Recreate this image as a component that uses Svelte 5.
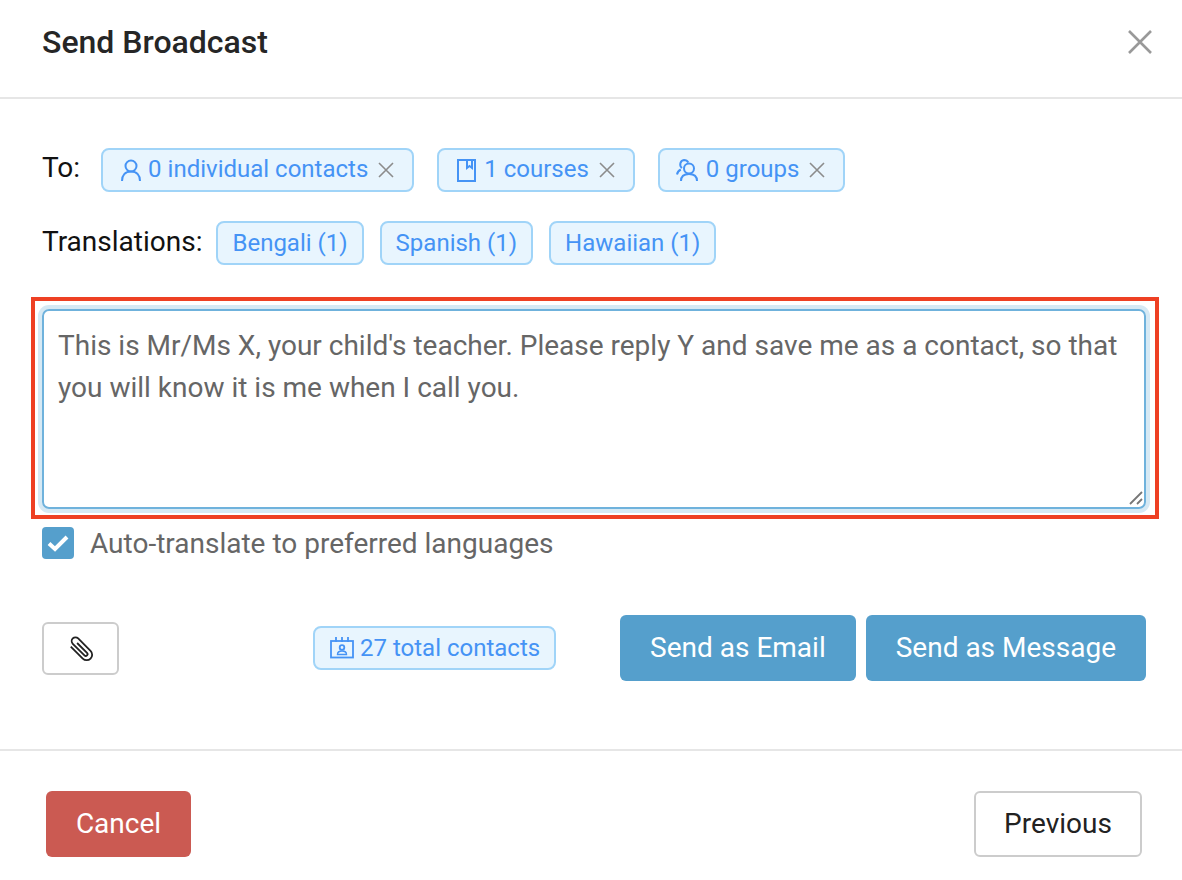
<script>
	let message = "This is Mr/Ms X, your child's teacher. Please reply Y and save me as a contact, so that you will know it is me when I call you.";
	let autoTranslate = true;
	const translations = ["Bengali (1)", "Spanish (1)", "Hawaiian (1)"];
</script>

<div class="modal">
	<header class="head">
		<h2>Send Broadcast</h2>
		<button class="close" aria-label="Close">
			<svg width="26" height="26" viewBox="0 0 26 26"><path d="M2 2L24 24M24 2L2 24" stroke="#999" stroke-width="2.6" fill="none"/></svg>
		</button>
	</header>

	<section class="body">
		<div class="row to">
			<span class="label">To:</span>
			<span class="tag">
				<svg class="ico" width="20" height="22" viewBox="0 0 20 22" fill="none" stroke="currentColor" stroke-width="2"><circle cx="10" cy="7" r="5.500"/><path d="M1 22c0-6 3.500-9.500 9-9.500s9 3.500 9 9.500"/></svg>
				<span class="txt">0 individual contacts</span>
				<svg class="x" width="16" height="16" viewBox="0 0 16 16"><path d="M1 1L15 15M15 1L1 15" stroke="#8c8c8c" stroke-width="1.600"/></svg>
			</span>
			<span class="tag courses">
				<svg class="ico" width="19" height="23" viewBox="0 0 19 23" fill="none" stroke="currentColor" stroke-width="2"><rect x="1" y="1" width="17" height="21"/><path d="M10 1v8l2.500-2 2.500 2V1"/></svg>
				<span class="txt">1 courses</span>
				<svg class="x" width="16" height="16" viewBox="0 0 16 16"><path d="M1 1L15 15M15 1L1 15" stroke="#8c8c8c" stroke-width="1.600"/></svg>
			</span>
			<span class="tag groups">
				<svg class="ico" width="22" height="22" viewBox="0 0 22 22" fill="none" stroke="currentColor" stroke-width="2"><circle cx="13" cy="9.500" r="5"/><path d="M5 22c0-4.500 3-7 8-7s8 2.500 8 7"/><path d="M6 9A4.500 4.500 0 0 1 8 1c2 0 3.500 1 4.300 2.500M1 15.500c.5-2.500 1.800-4 3.800-5"/></svg>
				<span class="txt">0 groups</span>
				<svg class="x" width="16" height="16" viewBox="0 0 16 16"><path d="M1 1L15 15M15 1L1 15" stroke="#8c8c8c" stroke-width="1.600"/></svg>
			</span>
		</div>

		<div class="row trans">
			<span class="label">Translations:</span>
			{#each translations as t}
				<span class="tag plain">{t}</span>
			{/each}
		</div>

		<div class="highlight">
			<div class="area">
				<textarea bind:value={message}></textarea>
				<svg class="grip" width="14" height="14" viewBox="0 0 14 14"><path d="M1 13L13 1M8 13L13 8" stroke="#777" stroke-width="1.800"/></svg>
			</div>
		</div>

		<label class="auto">
			<input type="checkbox" bind:checked={autoTranslate} />
			<span class="box">
				<svg width="22" height="18" viewBox="0 0 22 18"><path d="M2 9.500L8 15L20 3" stroke="#fff" stroke-width="4" fill="none"/></svg>
			</span>
			<span>Auto-translate to preferred languages</span>
		</label>

		<div class="actions">
			<button class="attach" aria-label="Attach">
				<svg width="30" height="30" viewBox="0 0 30 30" fill="none" stroke="#222" stroke-width="1.800"><g transform="rotate(-45 15 15)"><path d="M9.500 6v17a5.500 5.500 0 0 0 11 0V5.500a3.800 3.800 0 0 0-7.600 0V22a1.800 1.800 0 0 0 3.600 0V8"/></g></svg>
			</button>
			<span class="tag total">
				<svg class="ico" width="24" height="22" viewBox="0 0 24 22" fill="none" stroke="currentColor" stroke-width="1.800"><rect x="1" y="4" width="22" height="16.500"/><path d="M6 0v5M12 0v5M18 0v5"/><circle cx="12" cy="10.500" r="2.300"/><path d="M7.500 17.500c0-2.500 2-3.500 4.500-3.500s4.500 1 4.500 3.500z" stroke-width="1.400"/></svg>
				<span class="txt">27 total contacts</span>
			</span>
			<div class="send">
				<button class="btn primary email">Send as Email</button>
				<button class="btn primary">Send as Message</button>
			</div>
		</div>
	</section>

	<footer class="foot">
		<button class="btn danger">Cancel</button>
		<button class="btn outline">Previous</button>
	</footer>
</div>

<style>
	:global(body) {
		background: #fff;
		font-family: Roboto, "Liberation Sans", sans-serif;
	}

	.modal {
		width: 1182px;
		height: 880px;
		overflow: hidden;
		color: #222;
	}

	.head {
		box-sizing: border-box;
		padding: 0 29px 13px 42px;
		display: flex;
		align-items: center;
		justify-content: space-between;
		border-bottom: 2px solid #e6e6e6;
		height: 99px;
	}

	h2 {
		margin: 0;
		font-size: 32px;
		font-weight: 500;
		color: #262626;
	}

	.close {
		border: 0;
		background: none;
		padding: 0;
		display: flex;
	}

	.body {
		padding: 49px 36px 0 42px;
		box-sizing: border-box;
		border-bottom: 2px solid #e6e6e6;
		height: 652px;
	}

	.row {
		display: flex;
		align-items: center;
	}

	.to {
		gap: 23px;
		height: 44px;
	}

	.trans {
		gap: 16px;
		height: 44px;
		margin-top: 29px;
	}

	.label {
		font-size: 28px;
		line-height: 40px;
		margin-top: -4px;
		color: #111;
	}

	.to .label {
		margin-right: -2px;
	}

	.trans .label {
		margin-right: -2px;
		margin-top: -2px;
	}

	.tag {
		display: inline-flex;
		align-items: center;
		height: 44px;
		box-sizing: border-box;
		padding: 0 18px;
		border: 2px solid #a0d4f8;
		border-radius: 8px;
		background: #e8f5fe;
		color: #4593f5;
		font-size: 24px;
		white-space: nowrap;
	}

	.plain {
		padding: 0 14px;
	}

	.courses .ico,
	.groups .ico {
		margin-right: 8px;
	}

	.groups {
		padding-left: 16px;
	}

	.ico {
		margin-right: 7px;
		flex: none;
	}

	.txt {
		margin-top: -2px;
	}

	.x {
		margin-left: 10px;
		margin-top: -1px;
	}

	.highlight {
		margin: 32px -13px 0 -11px;
		height: 222px;
		box-sizing: border-box;
		border: 4px solid #ee4023;
		padding: 8px 9px 6px 7px;
	}

	.area {
		position: relative;
		height: 200px;
		border-radius: 7px;
		box-shadow: 0 0 0 4px #d6e9f4;
	}

	textarea {
		display: block;
		width: 100%;
		height: 100%;
		box-sizing: border-box;
		padding: 14px 14px;
		border: 2px solid #6fb2dc;
		border-radius: 7px;
		outline: none;
		resize: none;
		font: 28px/42px Roboto, "Liberation Sans", sans-serif;
		color: #666;
		overflow: hidden;
	}

	.grip {
		position: absolute;
		right: 3px;
		bottom: 4px;
	}

	.auto {
		display: flex;
		align-items: center;
		gap: 16px;
		margin-top: 8px;
		height: 32px;
		font-size: 28px;
		color: #666;
	}

	.auto input {
		display: none;
	}

	.box {
		width: 32px;
		height: 32px;
		border-radius: 4px;
		background: #559fcc;
		display: flex;
		align-items: center;
		justify-content: center;
	}

	.actions {
		display: flex;
		align-items: center;
		margin-top: 56px;
		height: 66px;
	}

	.attach {
		width: 77px;
		height: 53px;
		box-sizing: border-box;
		align-self: flex-start;
		margin-top: 7px;
		background: #fff;
		border: 2px solid #ccc;
		border-radius: 6px;
		padding: 0;
		display: flex;
		align-items: center;
		justify-content: center;
	}

	.total {
		margin-left: 194px;
		padding: 0 14px 0 15px;
	}

	.total .ico {
		margin-right: 6px;
	}

	.total .txt {
		margin-top: -1px;
	}

	.send {
		margin-left: auto;
		display: flex;
		gap: 10px;
	}

	.btn {
		height: 66px;
		box-sizing: border-box;
		border-radius: 6px;
		font: 28px Roboto, "Liberation Sans", sans-serif;
		border: 0;
		padding: 0 30px 2px;
	}

	.primary {
		background: #559fcc;
		color: #fff;
	}

	.danger {
		background: #cb5a52;
		color: #fff;
		width: 145px;
		padding: 0 0 2px;
	}

	.outline {
		background: #fff;
		border: 2px solid #ccc;
		color: #222;
		width: 168px;
		padding: 0 0 2px;
	}

	.foot {
		display: flex;
		justify-content: space-between;
		padding: 40px 40px 0 46px;
	}
</style>
